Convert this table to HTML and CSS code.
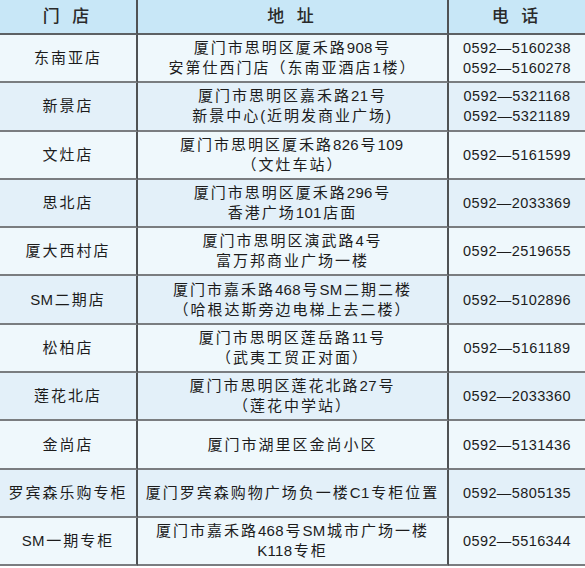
FILE: index.html
```html
<!DOCTYPE html>
<html lang="zh-CN">
<head>
<meta charset="utf-8">
<title>门店地址电话</title>
<link rel="stylesheet" href="styles.css">
</head>
<body>
<div class="table">
  <div class="cell head c1">门 店</div>
  <div class="cell head c2">地 址</div>
  <div class="cell head c3">电 话</div>

  <div class="cell c1 odd"><p class="t">东南亚店</p></div>
  <div class="cell c2 odd"><p class="t">厦门市思明区厦禾路<span class="n">908</span>号<br>安第仕西门店（东南亚酒店<span class="n">1</span>楼）</p></div>
  <div class="cell c3 odd phone"><p class="t">0592—5160238<br>0592—5160278</p></div>

  <div class="cell c1 even"><p class="t">新景店</p></div>
  <div class="cell c2 even"><p class="t">厦门市思明区嘉禾路<span class="n">21</span>号<br>新景中心<span class="n">(</span>近明发商业广场<span class="n">)</span></p></div>
  <div class="cell c3 even phone"><p class="t">0592—5321168<br>0592—5321189</p></div>

  <div class="cell c1 odd"><p class="t">文灶店</p></div>
  <div class="cell c2 odd"><p class="t">厦门市思明区厦禾路<span class="n">826</span>号<span class="n">109</span><br>（文灶车站）</p></div>
  <div class="cell c3 odd phone"><p class="t">0592—5161599</p></div>

  <div class="cell c1 even"><p class="t">思北店</p></div>
  <div class="cell c2 even"><p class="t">厦门市思明区厦禾路<span class="n">296</span>号<br>香港广场<span class="n">101</span>店面</p></div>
  <div class="cell c3 even phone"><p class="t">0592—2033369</p></div>

  <div class="cell c1 odd"><p class="t">厦大西村店</p></div>
  <div class="cell c2 odd"><p class="t">厦门市思明区演武路<span class="n">4</span>号<br>富万邦商业广场一楼</p></div>
  <div class="cell c3 odd phone"><p class="t">0592—2519655</p></div>

  <div class="cell c1 even"><p class="t"><span class="n">SM</span>二期店</p></div>
  <div class="cell c2 even"><p class="t">厦门市嘉禾路<span class="n">468</span>号<span class="n">SM</span>二期二楼<br>（哈根达斯旁边电梯上去二楼）</p></div>
  <div class="cell c3 even phone"><p class="t">0592—5102896</p></div>

  <div class="cell c1 odd"><p class="t">松柏店</p></div>
  <div class="cell c2 odd"><p class="t">厦门市思明区莲岳路<span class="n">11</span>号<br>（武夷工贸正对面）</p></div>
  <div class="cell c3 odd phone"><p class="t">0592—5161189</p></div>

  <div class="cell c1 even"><p class="t">莲花北店</p></div>
  <div class="cell c2 even"><p class="t">厦门市思明区莲花北路<span class="n">27</span>号<br>（莲花中学站）</p></div>
  <div class="cell c3 even phone"><p class="t">0592—2033360</p></div>

  <div class="cell c1 odd"><p class="t">金尚店</p></div>
  <div class="cell c2 odd"><p class="t">厦门市湖里区金尚小区</p></div>
  <div class="cell c3 odd phone"><p class="t">0592—5131436</p></div>

  <div class="cell c1 even"><p class="t">罗宾森乐购专柜</p></div>
  <div class="cell c2 even"><p class="t">厦门罗宾森购物广场负一楼<span class="n">C1</span>专柜位置</p></div>
  <div class="cell c3 even phone"><p class="t">0592—5805135</p></div>

  <div class="cell c1 odd"><p class="t"><span class="n">SM</span>一期专柜</p></div>
  <div class="cell c2 odd"><p class="t">厦门市嘉禾路<span class="n">468</span>号<span class="n">SM</span>城市广场一楼<br><span class="n">K118</span>专柜</p></div>
  <div class="cell c3 odd phone"><p class="t">0592—5516344</p></div>
</div>
</body>
</html>
```
FILE: styles.css
```css
html, body {
  margin: 0;
  padding: 0;
  background: #ffffff;
}

.table {
  display: grid;
  width: 585px;
  grid-template-columns: 138px 311px 136px;
  grid-template-rows: 35px repeat(11, 48.3px);
  font-family: "Liberation Sans", "Noto Sans CJK SC", sans-serif;
  color: #1c1c1c;
}

.cell {
  display: flex;
  align-items: center;
  justify-content: center;
  text-align: center;
  white-space: nowrap;
  box-sizing: border-box;
  border-bottom: 2px solid #7a7d80;
  font-size: 15px;
  line-height: 20px;
  letter-spacing: 2px;
}

.t {
  margin: 0;
}

.n {
  letter-spacing: 0.3px;
  margin-right: 1.5px;
}

.c1, .c2 {
  border-right: 2px solid #4f5254;
}

.head {
  background: #c8e7f7;
  font-size: 17px;
  font-weight: 500;
  letter-spacing: 4px;
  color: #2a2a2a;
  border-bottom-color: #5d6164;
}

.odd {
  background: #eff8fc;
}

.even {
  background: #e3f0f9;
}

.phone {
  font-size: 14.5px;
  letter-spacing: 0.4px;
}
```
